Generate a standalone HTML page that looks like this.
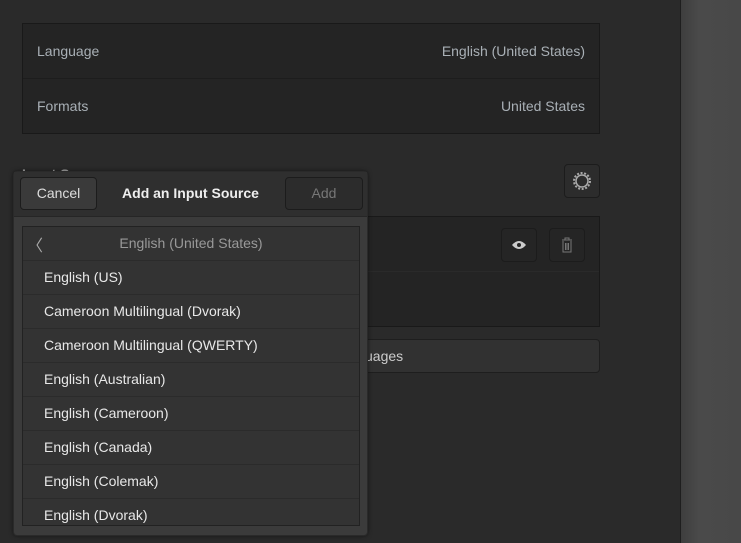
<!DOCTYPE html>
<html><head><style>
body{margin:0;width:741px;height:543px;background:#2a2a2a;font-family:"Liberation Sans",sans-serif;font-size:14px;color:#ccc;position:relative;overflow:hidden}
.abs{position:absolute;box-sizing:border-box}
.right{left:680px;top:0;width:61px;height:543px;background:linear-gradient(90deg,#3e3e3e,#4a4a4a 30%,#484848);border-left:1px solid #1e1e1e}
.frame{background:#242424;border:1px solid #191919}
.lbl{position:absolute;color:#a9b0b6}
.btn{background:#2c2c2c;border:1px solid #1c1c1c;border-radius:4px}
.row{position:absolute;left:0;width:100%;height:34px;border-top:1px solid #2b2b2b;line-height:32px;padding-left:21px;box-sizing:border-box;color:#e8e8e8}
</style></head><body>
<div class="abs right"></div>
<div class="abs frame" style="left:22px;top:23px;width:578px;height:111px">
 <div class="abs" style="left:0;top:54px;width:100%;height:1px;background:#1d1d1d"></div>
 <span class="lbl" style="left:14px;top:19px">Language</span>
 <span class="lbl" style="right:14px;top:19px">English (United States)</span>
 <span class="lbl" style="left:14px;top:74px">Formats</span>
 <span class="lbl" style="right:14px;top:74px">United States</span>
</div>
<span class="lbl" style="left:22px;top:166px;font-weight:bold;color:#aaa">Input Sources</span>
<div class="abs btn" style="left:564px;top:164px;width:36px;height:34px">
 <svg width="34" height="32" viewBox="0 0 34 32"><circle cx="17" cy="16" r="6" fill="none" stroke="#aaa" stroke-width="1.5"/><circle cx="17" cy="16" r="8" fill="none" stroke="#aaa" stroke-width="2" stroke-dasharray="2 1.6"/></svg>
</div>
<div class="abs frame" style="left:22px;top:216px;width:578px;height:111px">
 <div class="abs" style="left:0;top:54px;width:100%;height:1px;background:#2a2a2a"></div>
 <div class="abs btn" style="left:478px;top:11px;width:36px;height:34px;background:#252525">
  <svg width="34" height="32" viewBox="0 0 34 32"><path d="M10 16Q17 8 24 16Q17 24 10 16Z" fill="#ccc"/><circle cx="17" cy="16" r="2" fill="#252525"/></svg>
 </div>
 <div class="abs btn" style="left:526px;top:11px;width:36px;height:34px;background:#252525">
  <svg width="34" height="32" viewBox="0 0 34 32"><path d="M12 11H22M15 11V9H19V11M13 12V23H21V12M15.5 14V21M17 14V21M18.5 14V21" fill="none" stroke="#777" stroke-width="1"/></svg>
 </div>
</div>
<div class="abs btn" style="left:300px;top:339px;width:300px;height:34px;background:#313131;border-color:#1e1e1e">
 <span style="position:absolute;left:64px;top:8px;color:#ccc">uages</span>
</div>
<div class="abs" style="left:13px;top:171px;width:355px;height:365px;background:#3b3b3b;border:1px solid #2a2a2a;border-radius:4px;box-shadow:0 0 4px rgba(0,0,0,.5)">
 <div class="abs" style="left:0;top:0;width:100%;height:45px;background:#2f2f2f;border-bottom:1px solid #262626"></div>
 <div class="abs btn" style="left:6px;top:5px;width:77px;height:33px;background:#3a3a3a;text-align:center;line-height:31px;color:#ddd">Cancel</div>
 <div class="abs" style="left:0;width:100%;top:13px;text-align:center;font-weight:bold;color:#eee">Add an Input Source</div>
 <div class="abs btn" style="left:271px;top:5px;width:78px;height:33px;background:#2c2c2c;text-align:center;line-height:31px;color:#777">Add</div>
 <div class="abs" style="left:8px;top:54px;width:338px;height:300px;background:#333;border:1px solid #222;overflow:hidden">
  <div style="position:absolute;left:0;top:0;width:100%;height:34px;line-height:32px;text-align:center;color:#999">English (United States)</div>
  <div style="position:absolute;left:4px;top:5px;color:#aaa;font-size:16px">〈</div>
  <div class="row" style="top:33px">English (US)</div>
  <div class="row" style="top:67px">Cameroon Multilingual (Dvorak)</div>
  <div class="row" style="top:101px">Cameroon Multilingual (QWERTY)</div>
  <div class="row" style="top:135px">English (Australian)</div>
  <div class="row" style="top:169px">English (Cameroon)</div>
  <div class="row" style="top:203px">English (Canada)</div>
  <div class="row" style="top:237px">English (Colemak)</div>
  <div class="row" style="top:271px">English (Dvorak)</div>
 </div>
</div>
</body></html>
